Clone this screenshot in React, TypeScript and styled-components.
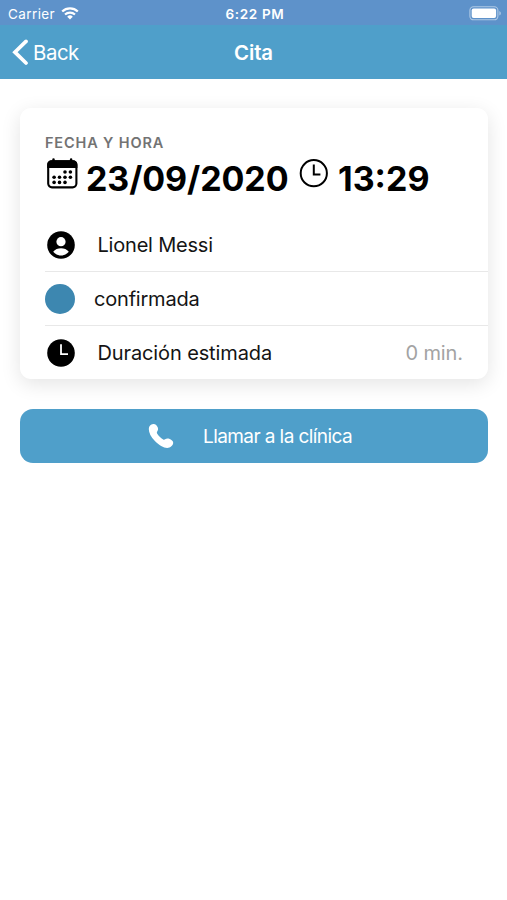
import React from "react";
import styled, { createGlobalStyle } from "styled-components";

const App: React.FC = () => {
	return (
		<Screen>
			<GlobalStyle />
			<StatusBar>
				<Carrier>
					<Label $size={13.5} $spacing={0.4}>
						Carrier
					</Label>
					<WifiIcon />
				</Carrier>
				<Label $size={13.5} $weight={600} $spacing={0.65}>
					6:22 PM
				</Label>
				<BatterySide>
					<BatteryIcon />
				</BatterySide>
			</StatusBar>
			<NavBar>
				<BackButton>
					<BackIcon />
					<Label $size={20.4} $spacing={-0.45}>
						Back
					</Label>
				</BackButton>
				<Label $size={20.4} $weight={600} $spacing={-0.1}>
					Cita
				</Label>
				<NavSide />
			</NavBar>
			<Content>
				<Card>
					<Subtitle>Fecha y hora</Subtitle>
					<DateTime>
						<CalendarIcon />
						<DateText>23/09/2020</DateText>
						<ClockIcon />
						<TimeText>13:29</TimeText>
					</DateTime>
					<List>
						<Row>
							<IconSlot>
								<PersonIcon />
							</IconSlot>
							<Label $size={20} $spacing={-0.2}>
								Lionel Messi
							</Label>
						</Row>
						<Row>
							<StatusDot />
							<Label $size={20} $spacing={-0.2}>
								confirmada
							</Label>
						</Row>
						<Row>
							<IconSlot>
								<TimeIcon />
							</IconSlot>
							<Label $size={20} $spacing={-0.12}>
								Duración estimada
							</Label>
							<Note>0 min.</Note>
						</Row>
					</List>
				</Card>
				<CallButton>
					<PhoneIcon />
					<CallLabel $size={19} $spacing={-0.58}>
						Llamar a la clínica
					</CallLabel>
				</CallButton>
			</Content>
		</Screen>
	);
};

export default App;

const WifiIcon = () => (
	<svg width="18" height="13" viewBox="0 0 18 13" fill="none">
		<path d="M1.2 4.5a11.2 11.2 0 0 1 15.6 0" stroke="#fff" strokeWidth="2.3" />
		<path d="M4 7.6a7.2 7.2 0 0 1 10 0" stroke="#fff" strokeWidth="2.1" />
		<path d="M9 12.4 6.2 9.7a4 4 0 0 1 5.6 0z" fill="#fff" />
	</svg>
);

const BatteryIcon = () => (
	<svg width="33" height="15" viewBox="0 0 33 15" fill="none">
		<rect x="0.9" y="0.8" width="28" height="13" rx="3.6" stroke="#fff" strokeOpacity="0.5" strokeWidth="1.1" />
		<rect x="2.7" y="2.6" width="24.4" height="9.4" rx="1.9" fill="#fff" />
		<path d="M30.4 5v4.6c1.9-.8 1.9-3.8 0-4.6z" fill="#fff" fillOpacity="0.55" />
	</svg>
);

const BackIcon = () => (
	<svg width="16" height="28" viewBox="0 0 16 28" fill="none">
		<path d="M14 2.4 2.9 13.2 14 24" stroke="#fff" strokeWidth="3.7" strokeLinecap="round" />
	</svg>
);

const CalendarIcon = () => (
	<svg width="31" height="31" viewBox="0 0 31 31">
		<rect x="1.2" y="3.2" width="28.2" height="26.2" rx="3.8" fill="#fff" stroke="#000" strokeWidth="2.1" />
		<path d="M.2 9.9V6.500a4.200 4.200 0 0 1 4.200-4.200h21.800a4.200 4.200 0 0 1 4.200 4.200v3.400z" />
		<path d="M6.500 1.600v2M24.100 1.600v2" stroke="#000" strokeWidth="2.500" strokeLinecap="round" />
		<circle cx="18" cy="14" r="1.8" />
		<circle cx="23.4" cy="14" r="1.8" />
		<circle cx="7.1" cy="19.2" r="1.8" />
		<circle cx="12.5" cy="19.2" r="1.8" />
		<circle cx="18" cy="19.2" r="1.8" />
		<circle cx="23.4" cy="19.2" r="1.8" />
		<circle cx="7.1" cy="24.4" r="1.8" />
		<circle cx="12.5" cy="24.4" r="1.8" />
		<circle cx="18" cy="24.4" r="1.8" />
	</svg>
);

const ClockIcon = () => (
	<svg width="29" height="30" viewBox="0 0 29 30" fill="none" stroke="#000">
		<circle cx="14.8" cy="15.2" r="13.1" strokeWidth="2" />
		<path d="M14.8 6.4v10h6.6" strokeWidth="2" />
	</svg>
);

const PersonIcon = () => (
	<svg width="28" height="28" viewBox="0 0 28 28">
		<circle cx="14" cy="14" r="13.8" />
		<circle cx="14" cy="10.7" r="4.6" fill="#fff" />
		<path d="M6.2 20.8c1.8-2.4 4.8-3.5 7.8-3.5s6 1.1 7.8 3.5c-1.9 2.4-4.7 3.7-7.8 3.7s-5.9-1.3-7.8-3.7z" fill="#fff" />
	</svg>
);

const TimeIcon = () => (
	<svg width="28" height="28" viewBox="0 0 28 28">
		<circle cx="14" cy="14" r="13.8" />
		<path d="M14 5.2v10h7" fill="none" stroke="#fff" strokeWidth="1.8" />
	</svg>
);

const PhoneIcon = () => (
	<svg width="26" height="26" viewBox="0 0 26 26" fill="#fff">
		<path d="M5.2 1C7.5.8 9 2.6 9.800 4.600c.6 1.600.2 2.800-.6 3.900-.5.7-.5 1.300-.1 2 1.400 2.400 3.500 4.500 6.100 6 .8.4 1.300.3 1.900-.2 1.200-.9 2.600-1.200 4.100-.5 2.100 1 4.100 2.200 4 4-.1 2.800-2.800 5.100-6 5.100-3.700 0-8.300-2.900-12.300-6.900S.8 9.700.8 6C.8 3.300 2.700 1.200 5.200 1z" />
	</svg>
);

const GlobalStyle = createGlobalStyle`
	* {
		box-sizing: border-box;
	}
	body {
		margin: 0;
		background: #fff;
		font-family: Inter, "Liberation Sans", sans-serif;
	}
	svg {
		display: block;
		flex-shrink: 0;
	}
`;

const Screen = styled.div`
	min-height: 900px;
	background: #fff;
`;

const Label = styled.span<{ $size: number; $weight?: number; $spacing?: number }>`
	font-size: ${({ $size }) => $size}px;
	font-weight: ${({ $weight }) => $weight || 400};
	letter-spacing: ${({ $spacing }) => $spacing || 0}px;
	line-height: 1.2;
	white-space: nowrap;
`;

const StatusBar = styled.div`
	height: 25px;
	display: grid;
	grid-template-columns: 1fr auto 1fr;
	align-items: center;
	padding: 3px 5px 0 8px;
	background: #5e92ca;
	color: #fff;
`;

const Carrier = styled.div`
	display: flex;
	align-items: center;
	gap: 6px;

	svg {
		margin-top: -2px;
	}
`;

const BatterySide = styled.div`
	display: flex;
	justify-content: flex-end;
	padding-bottom: 1px;
`;

const NavBar = styled.div`
	height: 54px;
	display: grid;
	grid-template-columns: 1fr auto 1fr;
	align-items: center;
	padding: 2px 12px 0;
	background: #4f9fca;
	color: #fff;
`;

const NavSide = styled.div``;

const BackButton = styled.div`
	display: flex;
	align-items: center;
	gap: 5px;
	cursor: pointer;
`;

const Content = styled.div`
	padding: 29px 19px 0 20px;
`;

const Card = styled.div`
	height: 271px;
	padding: 26px 0 0 25px;
	border-radius: 11px;
	background: #fff;
	box-shadow: 0 5px 20px rgba(0, 0, 0, 0.11);
	overflow: hidden;
`;

const Subtitle = styled.div`
	font-size: 14.5px;
	font-weight: 600;
	line-height: 18px;
	letter-spacing: 0.85px;
	text-transform: uppercase;
	color: #737373;
`;

const DateTime = styled.div`
	height: 66px;
	display: flex;
	align-items: flex-start;
	padding: 6px 0 0 2px;
`;

const DateText = styled.span`
	width: 203px;
	margin: 0 10px 0 8px;
	font-size: 34px;
	font-weight: 700;
	line-height: 41px;
	letter-spacing: -0.1px;
	white-space: nowrap;
`;

const TimeText = styled(DateText)`
	width: auto;
	margin: 0 0 0 10px;
	letter-spacing: 0;
`;

const List = styled.div`
	display: flex;
	flex-direction: column;
`;

const Row = styled.div`
	height: 54px;
	display: flex;
	align-items: center;
	border-bottom: 1px solid #e8e8e8;
	color: #141414;
`;

const IconSlot = styled.div`
	width: 52.5px;
	padding-left: 2px;
`;

const StatusDot = styled.div`
	width: 30px;
	height: 30px;
	margin-right: 19px;
	border-radius: 50%;
	background: #3d87b0;
`;

const Note = styled.span`
	margin-left: auto;
	padding-right: 25px;
	font-size: 20px;
	letter-spacing: -0.1px;
	color: #a3a3a3;
`;

const CallButton = styled.div`
	height: 54px;
	margin-top: 30px;
	display: flex;
	align-items: center;
	gap: 29px;
	padding-left: 128px;
	border-radius: 13px;
	background: #4f9fca;
	color: #fff;
	cursor: pointer;
`;

const CallLabel = styled(Label)`
	padding-top: 2px;
`;
